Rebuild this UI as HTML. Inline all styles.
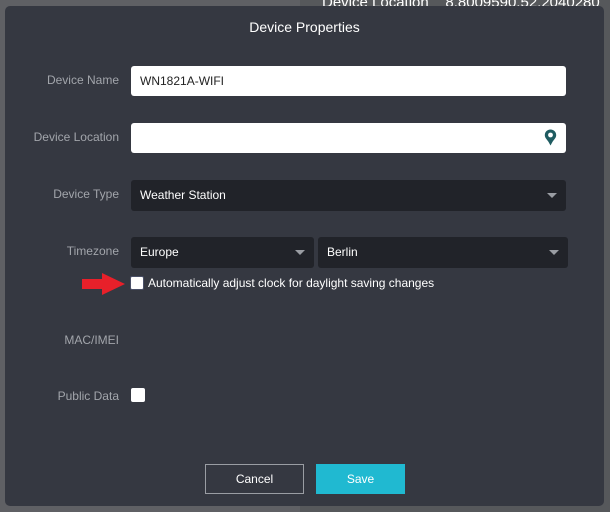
<!DOCTYPE html>
<html><head><style>
body{margin:0;width:610px;height:512px;background:#5f6064;position:relative;overflow:hidden;font-family:"Liberation Sans",sans-serif;}
.bgr{position:absolute;left:300px;top:0;width:310px;height:512px;background:#56585b}
.bgtxt{position:absolute;left:322px;top:-6px;color:#fff;font-size:15px}
.modal{position:absolute;left:5px;top:6px;width:599px;height:500px;background:#353841;border-radius:5px}
.title{position:absolute;left:0;width:599px;top:13px;text-align:center;color:#fff;font-size:14px}
.lbl{position:absolute;right:485px;color:#a2a5ab;font-size:12px;text-align:right;white-space:nowrap}
.inp{position:absolute;background:#fff;border-radius:3px;height:30px;font-size:12px;color:#222;line-height:30px;padding-left:9px;box-sizing:border-box}
.sel{position:absolute;background:#212329;border-radius:3px;height:31px;font-size:12px;color:#fff;line-height:31px;padding-left:9px;box-sizing:border-box}
.arr{position:absolute;right:9px;top:13px;width:0;height:0;border-left:5px solid transparent;border-right:5px solid transparent;border-top:5px solid #9a9da3}
.cb{position:absolute;width:14px;height:14px;background:#fff;border-radius:2px;box-sizing:border-box}
</style></head><body>
<div class="bgr"></div>
<div class="bgtxt">Device Location &nbsp;&nbsp; 8.8009590,52.2040280</div>
<div class="modal">
<div class="title">Device Properties</div>
<div class="lbl" style="top:67px">Device Name</div>
<div class="inp" style="left:126px;top:60px;width:435px">WN1821A-WIFI</div>
<div class="lbl" style="top:124px">Device Location</div>
<div class="inp" style="left:126px;top:117px;width:435px">
<svg style="position:absolute;right:9px;top:6px" width="13" height="17" viewBox="0 0 13 17"><path d="M6.5 0.5C3.2 0.5 0.8 3 0.8 6.1c0 2.7 2.2 4.4 3.7 6.8L6.5 16.5l2-3.6c1.5-2.4 3.7-4.1 3.7-6.8C12.2 3 9.8 0.5 6.5 0.5z" fill="#1f5c61"/><circle cx="6.5" cy="6" r="2.4" fill="#fff"/></svg></div>
<div class="lbl" style="top:181px">Device Type</div>
<div class="sel" style="left:126px;top:174px;width:435px">Weather Station<div class="arr"></div></div>
<div class="lbl" style="top:238px">Timezone</div>
<div class="sel" style="left:126px;top:231px;width:183px">Europe<div class="arr"></div></div>
<div class="sel" style="left:313px;top:231px;width:250px">Berlin<div class="arr"></div></div>
<svg style="position:absolute;left:76px;top:267px" width="46" height="22" viewBox="0 0 46 22"><path d="M1 6h20V0l23 11-23 11v-6H1z" fill="#e8202a"/></svg>
<div class="cb" style="left:125px;top:270px;border:1px solid #4a5068"></div>
<div style="position:absolute;left:143px;top:270px;color:#fff;font-size:12px">Automatically adjust clock for daylight saving changes</div>
<div class="lbl" style="top:327px">MAC/IMEI</div>
<div class="lbl" style="top:383px">Public Data</div>
<div class="cb" style="left:126px;top:382px"></div>
<div style="position:absolute;left:200px;top:458px;width:97px;height:28px;border:1px solid #9a9da3;color:#fff;font-size:12px;text-align:center;line-height:28px">Cancel</div>
<div style="position:absolute;left:311px;top:458px;width:89px;height:30px;background:#20b9d1;color:#fff;font-size:12px;text-align:center;line-height:30px">Save</div>
</div>
</body></html>
